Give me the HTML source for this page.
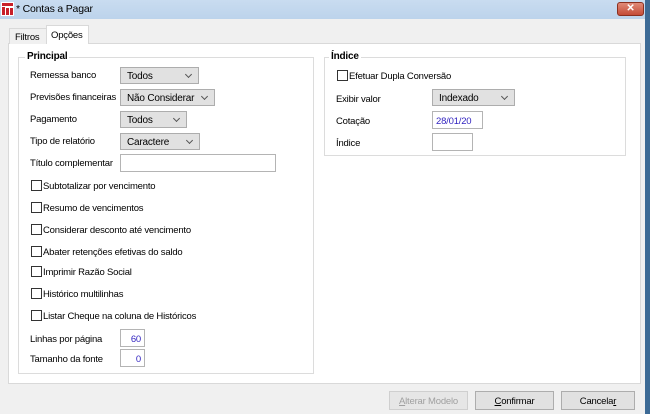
<!DOCTYPE html>
<html><head><meta charset="utf-8"><style>
*{box-sizing:border-box;margin:0;padding:0}
body{width:650px;height:414px;overflow:hidden;background:#f0f0f0;font-family:"Liberation Sans",sans-serif;font-size:9.5px;letter-spacing:-0.2px;color:#000;position:relative}
.a{position:absolute;white-space:nowrap}
.title{left:0;top:0;width:650px;height:19px;background:linear-gradient(#c9dcf0,#bcd3eb);}
.rb{right:0;top:0;width:5px;height:414px;background:#3c6a95}
.sel{position:absolute;height:17px;background:#e1e1e1;border:1px solid #adadad;padding:3px 0 0 6px;font-size:10px}
.sel:after{content:"";position:absolute;right:7px;top:4px;width:4px;height:4px;border-right:1px solid #555;border-bottom:1px solid #555;transform:rotate(45deg)}
.inp{position:absolute;background:#fff;border:1px solid #b4b4b4;height:18px;font-size:9.5px;color:#3325c0;padding:4px 3px 0}
.cb{position:absolute;width:11px;height:11px;border:1px solid #333;background:#fff}
.btn{position:absolute;top:391px;height:19px;border:1px solid #adadad;background:#e1e1e1;text-align:center;padding-top:4px;font-size:9.5px}
.grp{position:absolute;border:1px solid #dcdcdc;background:#fff}
.lg{position:absolute;font-weight:bold;font-size:10px;background:#fff;padding:0 2px}
</style></head><body>
<div class="a title"></div>
<svg class="a" style="left:1px;top:2px" width="13" height="14" viewBox="0 0 13 14"><rect x="0" y="0" width="13" height="14" fill="#fff"/><path d="M1 1h11v3H1z M1 5h3v8H1z M5 6h3v7H5z M9 6h3v7H9z" fill="#c8202a"/></svg>
<div class="a" style="left:16px;top:3px;font-size:10.5px">* Contas a Pagar</div>
<div class="a" style="left:617px;top:2px;width:27px;height:14px;background:linear-gradient(#e08a78,#c44c38);border:1px solid #8a3020;border-radius:3px;color:#fff;font-weight:bold;text-align:center;font-size:10px;line-height:12px">✕</div>
<div class="a rb"></div>
<div class="a" style="left:8px;top:43px;width:633px;height:341px;background:#fff;border:1px solid #d9d9d9"></div>
<div class="a" style="left:9px;top:28px;width:38px;height:16px;background:#f0f0f0;border:1px solid #d9d9d9;border-bottom:none;padding:3px 0 0 5px">Filtros</div>
<div class="a" style="left:46px;top:25px;width:43px;height:19px;background:#fff;border:1px solid #d9d9d9;border-bottom:none;padding:4px 0 0 4px">Opções</div>

<div class="grp" style="left:18px;top:57px;width:296px;height:317px"></div>
<div class="lg" style="left:25px;top:51px">Principal</div>
<div class="grp" style="left:324px;top:57px;width:302px;height:99px"></div>
<div class="lg" style="left:329px;top:51px">Índice</div>

<div class="a" style="left:30px;top:70px">Remessa banco</div>
<div class="sel" style="left:120px;top:67px;width:79px">Todos</div>
<div class="a" style="left:30px;top:92px">Previsões financeiras</div>
<div class="sel" style="left:120px;top:89px;width:95px">Não Considerar</div>
<div class="a" style="left:30px;top:114px">Pagamento</div>
<div class="sel" style="left:120px;top:111px;width:67px">Todos</div>
<div class="a" style="left:30px;top:136px">Tipo de relatório</div>
<div class="sel" style="left:120px;top:133px;width:80px">Caractere</div>
<div class="a" style="left:30px;top:158px">Título complementar</div>
<div class="inp" style="left:120px;top:154px;width:156px"></div>

<div class="cb" style="left:31px;top:180px"></div><div class="a" style="left:43px;top:181px">Subtotalizar por vencimento</div>
<div class="cb" style="left:31px;top:202px"></div><div class="a" style="left:43px;top:203px">Resumo de vencimentos</div>
<div class="cb" style="left:31px;top:224px"></div><div class="a" style="left:43px;top:225px">Considerar desconto até vencimento</div>
<div class="cb" style="left:31px;top:246px"></div><div class="a" style="left:43px;top:247px">Abater retenções efetivas do saldo</div>
<div class="cb" style="left:31px;top:266px"></div><div class="a" style="left:43px;top:267px">Imprimir Razão Social</div>
<div class="cb" style="left:31px;top:288px"></div><div class="a" style="left:43px;top:289px">Histórico multilinhas</div>
<div class="cb" style="left:31px;top:310px"></div><div class="a" style="left:43px;top:311px">Listar Cheque na coluna de Históricos</div>

<div class="a" style="left:30px;top:334px">Linhas por página</div>
<div class="inp" style="left:120px;top:329px;width:25px;text-align:right">60</div>
<div class="a" style="left:30px;top:354px">Tamanho da fonte</div>
<div class="inp" style="left:120px;top:349px;width:25px;text-align:right">0</div>

<div class="cb" style="left:337px;top:70px"></div><div class="a" style="left:349px;top:71px">Efetuar Dupla Conversão</div>
<div class="a" style="left:336px;top:94px">Exibir valor</div>
<div class="sel" style="left:432px;top:89px;width:83px">Indexado</div>
<div class="a" style="left:336px;top:116px">Cotação</div>
<div class="inp" style="left:432px;top:111px;width:51px">28/01/20</div>
<div class="a" style="left:336px;top:138px">Índice</div>
<div class="inp" style="left:432px;top:133px;width:41px"></div>

<div class="btn" style="left:389px;width:79px;color:#a0a0a0;background:#e6e6e6;border-color:#cfcfcf"><u>A</u>lterar Modelo</div>
<div class="btn" style="left:475px;width:79px"><u>C</u>onfirmar</div>
<div class="btn" style="left:561px;width:74px">Cancela<u>r</u></div>
</body></html>
